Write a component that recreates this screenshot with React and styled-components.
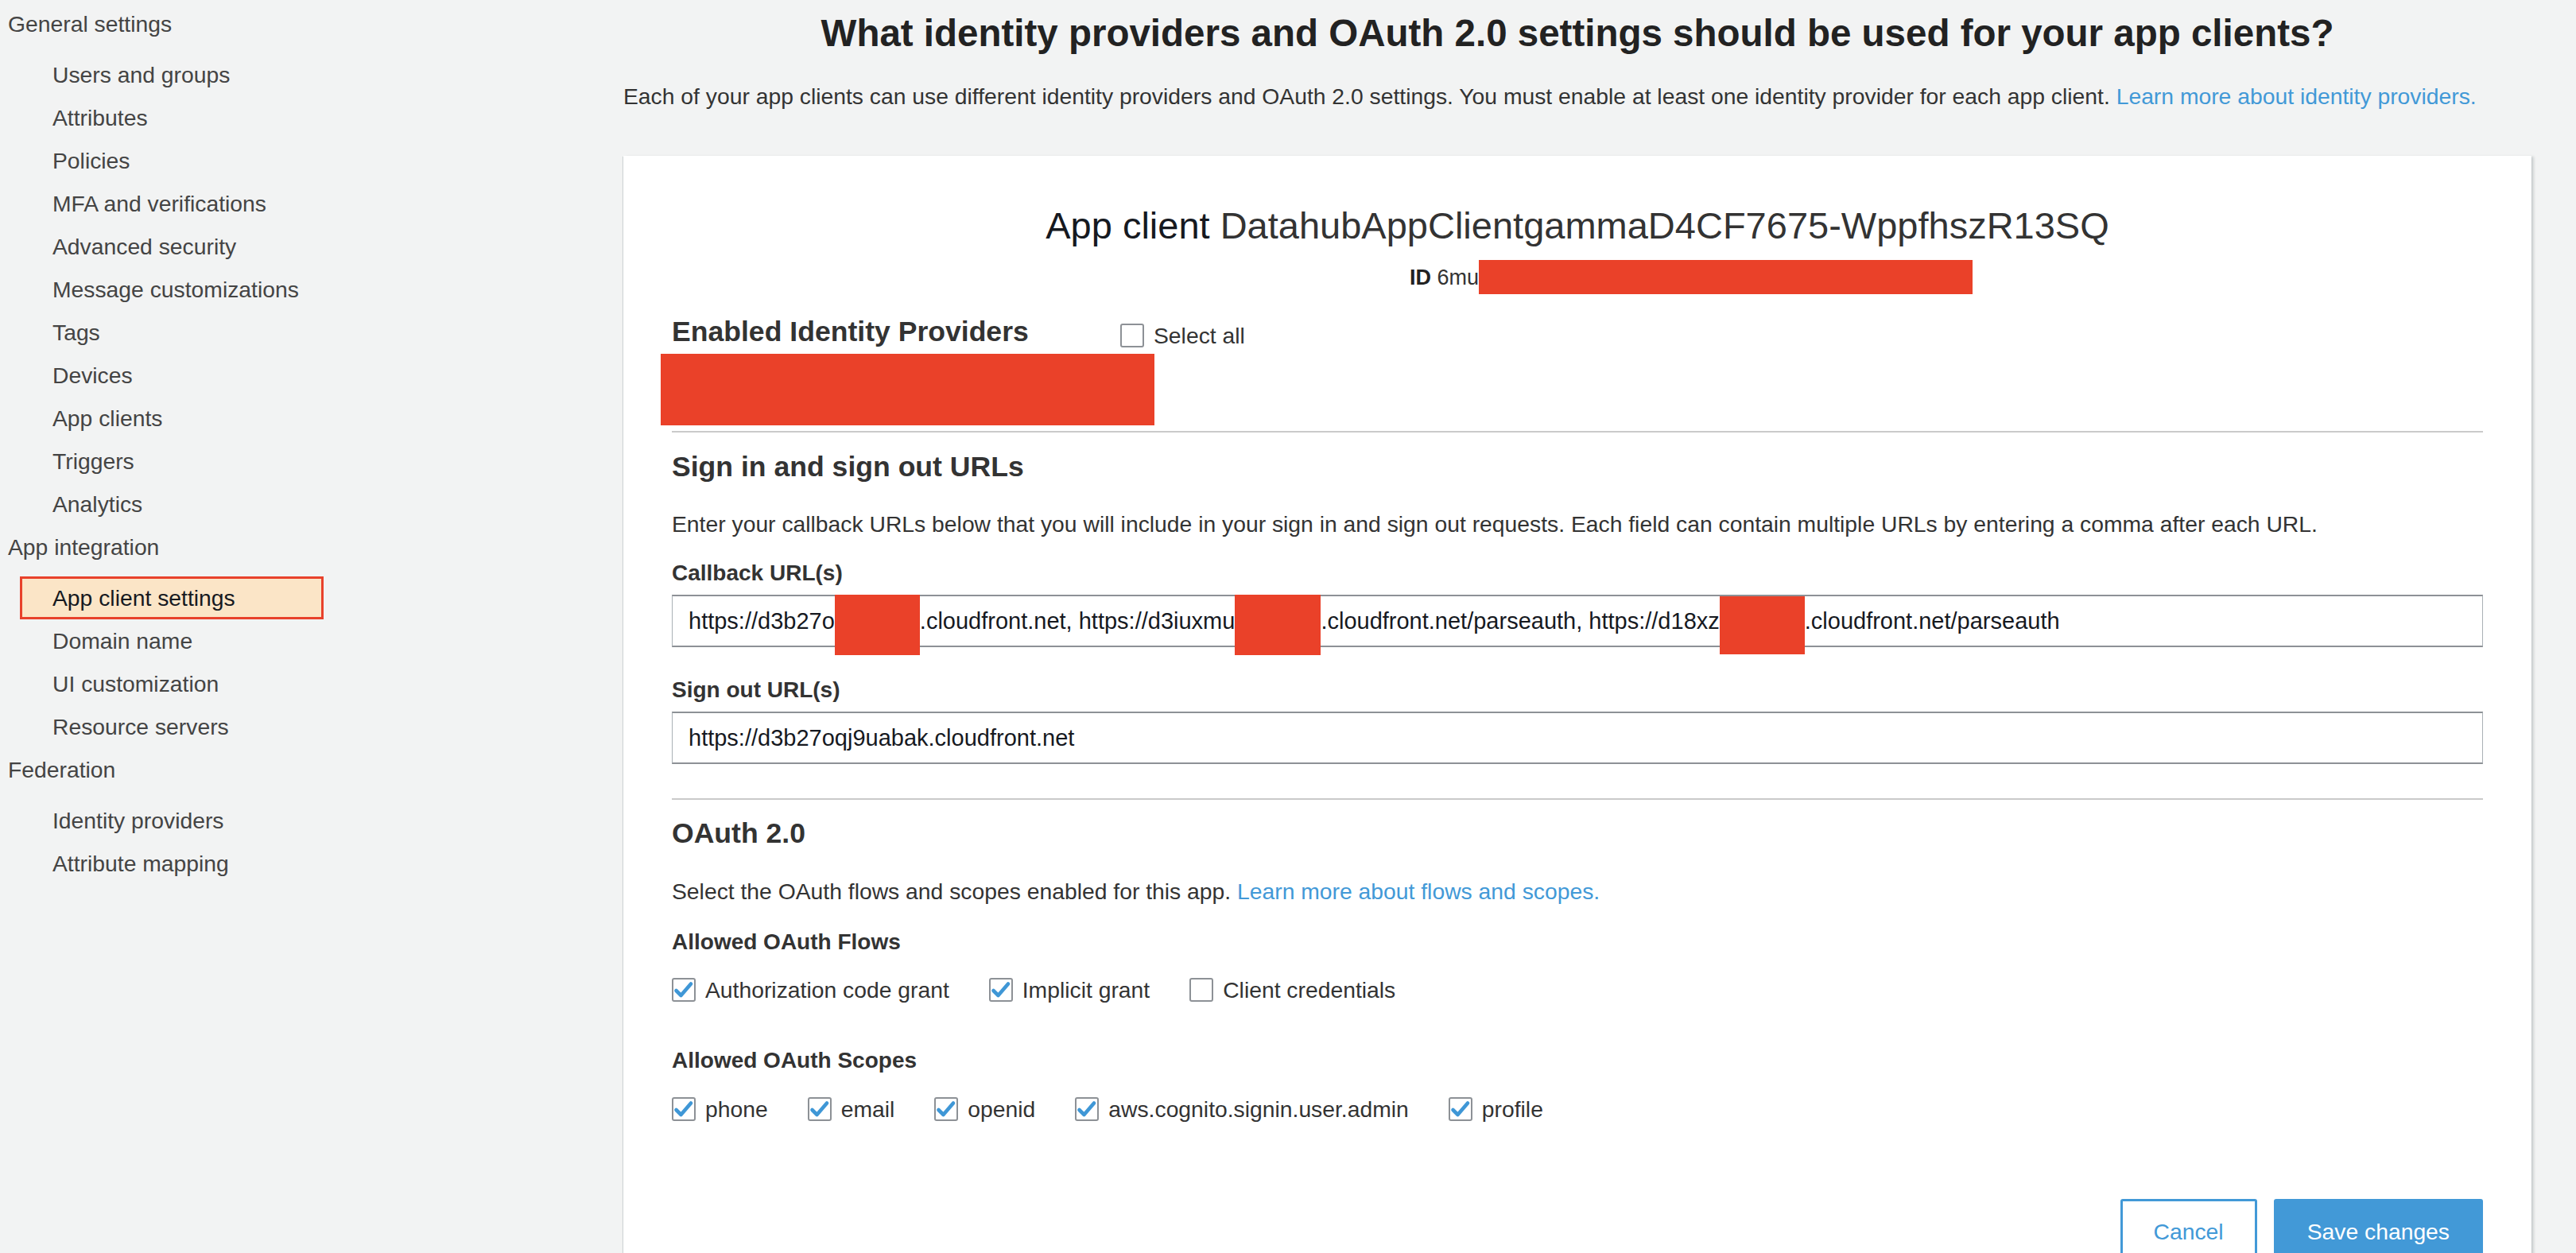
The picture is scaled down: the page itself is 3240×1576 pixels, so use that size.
import React from 'react';
import styled, { createGlobalStyle } from 'styled-components';

const GlobalStyle = createGlobalStyle`
  html, body {
    margin: 0;
    padding: 0;
  }
  body {
    background: #f2f3f3;
    font-family: "Liberation Sans", Arial, Helvetica, sans-serif;
    color: #333;
  }
`;

const Page = styled.div`
  display: grid;
  grid-template-columns: 784px 1fr;
  height: 1576px;
  overflow: hidden;
`;

const Sidebar = styled.nav`
  padding-top: 3px;
`;

const GroupTitle = styled.div`
  height: 54px;
  line-height: 54px;
  padding-left: 10px;
  margin-bottom: 10px;
  font-size: 28.3px;
  color: #444;
`;

const NavItem = styled.div`
  box-sizing: border-box;
  display: flex;
  align-items: center;
  width: 382px;
  height: 54px;
  margin-left: 25px;
  padding-left: 38px;
  font-size: 28.3px;
  color: ${({ $active }) => ($active ? '#16191f' : '#444')};
  background: ${({ $active }) => ($active ? '#fbe5c7' : 'transparent')};
  border: 3px solid ${({ $active }) => ($active ? '#e8412b' : 'transparent')};
`;

const Main = styled.main`
  min-width: 0;
  padding: 13px 56px 0 0;
`;

const PageTitle = styled.h1`
  margin: 0;
  font-size: 47.5px;
  line-height: 58px;
  font-weight: 700;
  color: #222;
  text-align: center;
  white-space: nowrap;
`;

const Intro = styled.p`
  margin: 32px 0 0;
  font-size: 28.3px;
  line-height: 36px;
  white-space: nowrap;
`;

const Link = styled.a`
  color: #4299d7;
  text-decoration: none;
`;

const Card = styled.section`
  margin-top: 57px;
  padding: 60px 61px 80px;
  background: #fff;
  box-shadow: 0 1px 1px rgba(0, 28, 36, 0.25), 3px 1px 3px rgba(0, 28, 36, 0.15),
    -1px 1px 1px rgba(0, 28, 36, 0.1);
`;

const ClientTitle = styled.h2`
  margin: 0;
  font-size: 47px;
  line-height: 56px;
  font-weight: 400;
  color: #333;
  text-align: center;
`;

const ClientWord = styled.span`
  color: #16191f;
`;

const IdLine = styled.div`
  margin-top: 19px;
  font-size: 27px;
  line-height: 36px;
  text-align: center;
  color: #333;

  b {
    color: #222;
  }
`;

const Redact = styled.span`
  position: relative;
  display: inline-block;
  flex: none;
  width: ${({ $w }) => $w}px;
  height: 1em;
  vertical-align: middle;

  &::after {
    content: '';
    position: absolute;
    left: 0;
    width: ${({ $cover }) => ($cover ? `${$cover}px` : '100%')};
    top: ${({ $top }) => $top}px;
    bottom: ${({ $bottom }) => $bottom}px;
    background: #ea4129;
  }
`;

const ProvidersRow = styled.div`
  display: flex;
  align-items: center;
  margin-top: 27px;
`;

const SectionTitle = styled.h3`
  margin: ${({ $mt }) => $mt || '0'} 0 0;
  font-size: 35.6px;
  line-height: 42px;
  font-weight: 700;
  color: #333;
  flex: ${({ $basis }) => ($basis ? `0 0 ${$basis}px` : 'none')};
`;

const RedactBar = styled.div`
  width: 621px;
  height: 90px;
  margin: 5px 0 0 -14px;
  background: #ea4129;
`;

const Divider = styled.hr`
  margin: ${({ $mt }) => $mt} 0 0;
  height: 2px;
  border: 0;
  background: #cacaca;
`;

const Text = styled.p`
  margin: ${({ $mt }) => $mt} 0 0;
  font-size: 28.3px;
  line-height: 36px;
  color: #333;
`;

const FieldLabel = styled.div`
  margin-top: ${({ $mt }) => $mt};
  font-size: 28px;
  line-height: 34px;
  font-weight: 700;
  color: #333;
`;

const UrlField = styled.div`
  box-sizing: border-box;
  display: flex;
  align-items: center;
  height: 66px;
  margin-top: 10px;
  padding-left: 20px;
  border: 1px solid #aab1b5;
  border-top: 2px solid #8d9196;
  border-bottom: 2px solid #8d9196;
  font-size: 29px;
  color: #16191f;
  white-space: pre;
`;

const OptionRow = styled.div`
  display: flex;
  gap: 50px;
  margin-top: ${({ $mt }) => $mt};
`;

const Option = styled.label`
  display: flex;
  align-items: center;
  gap: 12px;
  margin-top: ${({ $mt }) => $mt || '0'};
  font-size: 28.3px;
  line-height: 36px;
  color: #333;
`;

const Box = styled.span`
  box-sizing: border-box;
  display: inline-flex;
  align-items: center;
  justify-content: center;
  flex: none;
  width: 30px;
  height: 30px;
  border: 2px solid #8d9196;
  border-radius: 3px;
  background: #fff;
`;

const ButtonRow = styled.div`
  display: flex;
  justify-content: flex-end;
  gap: 21px;
  margin-top: 95px;
`;

const Button = styled.button`
  box-sizing: border-box;
  height: 82px;
  padding: 0 39px;
  border: 3px solid #4299d7;
  border-radius: 3px;
  font-family: inherit;
  font-size: 28.3px;
  background: ${({ $primary }) => ($primary ? '#4299d7' : '#fff')};
  color: ${({ $primary }) => ($primary ? '#fff' : '#4299d7')};
`;

const Checkbox = ({ checked }) => (
  <Box>
    {checked && (
      <svg width="26" height="24" viewBox="0 0 26 24">
        <path
          d="M3.5 13 L9.5 19 L22 4.5"
          fill="none"
          stroke="#3f97d6"
          strokeWidth="4.6"
          strokeLinecap="round"
          strokeLinejoin="round"
        />
      </svg>
    )}
  </Box>
);

const nav = [
  {
    title: 'General settings',
    items: [
      'Users and groups',
      'Attributes',
      'Policies',
      'MFA and verifications',
      'Advanced security',
      'Message customizations',
      'Tags',
      'Devices',
      'App clients',
      'Triggers',
      'Analytics',
    ],
  },
  {
    title: 'App integration',
    items: ['App client settings', 'Domain name', 'UI customization', 'Resource servers'],
  },
  {
    title: 'Federation',
    items: ['Identity providers', 'Attribute mapping'],
  },
];

const flows = [
  { label: 'Authorization code grant', checked: true },
  { label: 'Implicit grant', checked: true },
  { label: 'Client credentials', checked: false },
];

const scopes = ['phone', 'email', 'openid', 'aws.cognito.signin.user.admin', 'profile'];

const App = () => (
  <>
    <GlobalStyle />
    <Page>
      <Sidebar>
        {nav.map((group) => (
          <div key={group.title}>
            <GroupTitle>{group.title}</GroupTitle>
            {group.items.map((item) => (
              <NavItem key={item} $active={item === 'App client settings'}>
                {item}
              </NavItem>
            ))}
          </div>
        ))}
      </Sidebar>

      <Main>
        <PageTitle>What identity providers and OAuth 2.0 settings should be used for your app clients?</PageTitle>
        <Intro>
          Each of your app clients can use different identity providers and OAuth 2.0 settings. You must enable at
          least one identity provider for each app client. <Link href="#">Learn more about identity providers.</Link>
        </Intro>

        <Card>
          <ClientTitle>
            <ClientWord>App client</ClientWord> DatahubAppClientgammaD4CF7675-WppfhszR13SQ
          </ClientTitle>
          <IdLine>
            <b>ID</b> 6mu
            <Redact $w={335} $cover={621} $top={-10} $bottom={-6} />
          </IdLine>

          <ProvidersRow>
            <SectionTitle $basis={564}>Enabled Identity Providers</SectionTitle>
            <Option $mt="10px">
              <Checkbox />
              Select all
            </Option>
          </ProvidersRow>
          <RedactBar />

          <Divider $mt="7px" />

          <SectionTitle $mt="22px">Sign in and sign out URLs</SectionTitle>
          <Text $mt="33px">
            Enter your callback URLs below that you will include in your sign in and sign out requests. Each field can
            contain multiple URLs by entering a comma after each URL.
          </Text>

          <FieldLabel $mt="27px">Callback URL(s)</FieldLabel>
          <UrlField>
            {'https://d3b27o'}
            <Redact $w={107} $top={-19} $bottom={-28} />
            {'.cloudfront.net, https://d3iuxmu'}
            <Redact $w={108} $top={-19} $bottom={-28} />
            {'.cloudfront.net/parseauth, https://d18xz'}
            <Redact $w={107} $top={-17} $bottom={-27} />
            {'.cloudfront.net/parseauth'}
          </UrlField>

          <FieldLabel $mt="37px">Sign out URL(s)</FieldLabel>
          <UrlField>https://d3b27oqj9uabak.cloudfront.net</UrlField>

          <Divider $mt="43px" />

          <SectionTitle $mt="21px">OAuth 2.0</SectionTitle>
          <Text $mt="34px">
            Select the OAuth flows and scopes enabled for this app.{' '}
            <Link href="#">Learn more about flows and scopes.</Link>
          </Text>

          <FieldLabel $mt="29px">Allowed OAuth Flows</FieldLabel>
          <OptionRow $mt="25px">
            {flows.map((flow) => (
              <Option key={flow.label}>
                <Checkbox checked={flow.checked} />
                {flow.label}
              </Option>
            ))}
          </OptionRow>

          <FieldLabel $mt="54px">Allowed OAuth Scopes</FieldLabel>
          <OptionRow $mt="26px">
            {scopes.map((scope) => (
              <Option key={scope}>
                <Checkbox checked />
                {scope}
              </Option>
            ))}
          </OptionRow>

          <ButtonRow>
            <Button>Cancel</Button>
            <Button $primary>Save changes</Button>
          </ButtonRow>
        </Card>
      </Main>
    </Page>
  </>
);

export default App;
